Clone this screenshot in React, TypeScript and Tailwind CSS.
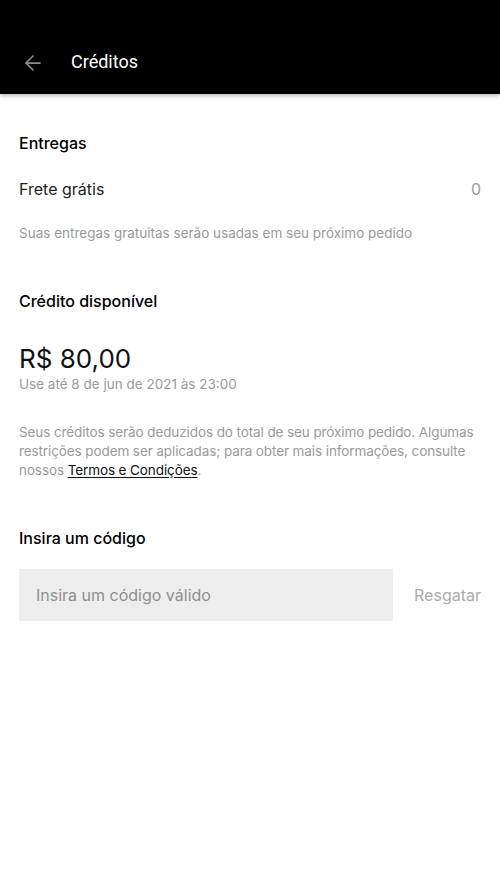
import { ArrowLeft } from "lucide-react";

export default function App() {
  return (
    <div className="min-h-[889px] w-full bg-white" style={{ fontFamily: "Inter, 'Noto Sans', sans-serif" }}>
      {/* Top bar */}
      <header className="flex h-[94px] items-end bg-black pb-[19px] shadow-[0_2px_4px_rgba(0,0,0,0.25)]">
        <ArrowLeft className="ml-[21px] h-[24px] w-[24px] text-[#8a8a8a]" strokeWidth={1.75} />
        <h1 className="ml-[26px] text-[18px] font-normal text-white" style={{ fontFamily: "Roboto, sans-serif" }}>
          Créditos
        </h1>
      </header>

      <main className="px-[19px] text-black">
        {/* Entregas */}
        <h2 className="mt-[38px] text-[16px] font-medium leading-[22px]">Entregas</h2>
        <div className="mt-[24px] flex items-center justify-between text-[16px] leading-[22px]">
          <span className="text-[#222]">Frete grátis</span>
          <span className="text-[#999]">0</span>
        </div>
        <p className="mt-[24px] text-[13.5px] leading-[18px] text-[#9a9a9a]">
          Suas entregas gratuitas serão usadas em seu próximo pedido
        </p>

        {/* Crédito */}
        <h2 className="mt-[48px] text-[16px] font-medium leading-[22px]">Crédito disponível</h2>
        <div className="mt-[30px] text-[26px] leading-[34px] text-[#111]">R$ 80,00</div>
        <p className="-mt-[1px] text-[13.5px] leading-[18px] text-[#9a9a9a]">Use até 8 de jun de 2021 às 23:00</p>

        <p className="mt-[30px] text-[13.5px] leading-[19px] tracking-[-0.1px] text-[#9a9a9a]">
          Seus créditos serão deduzidos do total de seu próximo pedido. Algumas restrições podem ser aplicadas; para
          obter mais informações, consulte nossos{" "}
          <span className="text-[#111] underline underline-offset-2">Termos e Condições</span>.
        </p>

        {/* Código */}
        <h2 className="mt-[47px] text-[16px] font-medium leading-[22px]">Insira um código</h2>
        <div className="mt-[20px] flex items-center">
          <div className="flex h-[52px] w-[374px] items-center bg-[#eeeeee] px-[17px] text-[16px] text-[#8f8f8f]">
            Insira um código válido
          </div>
          <span className="ml-auto text-[16px] text-[#ababab]">Resgatar</span>
        </div>
      </main>
    </div>
  );
}
